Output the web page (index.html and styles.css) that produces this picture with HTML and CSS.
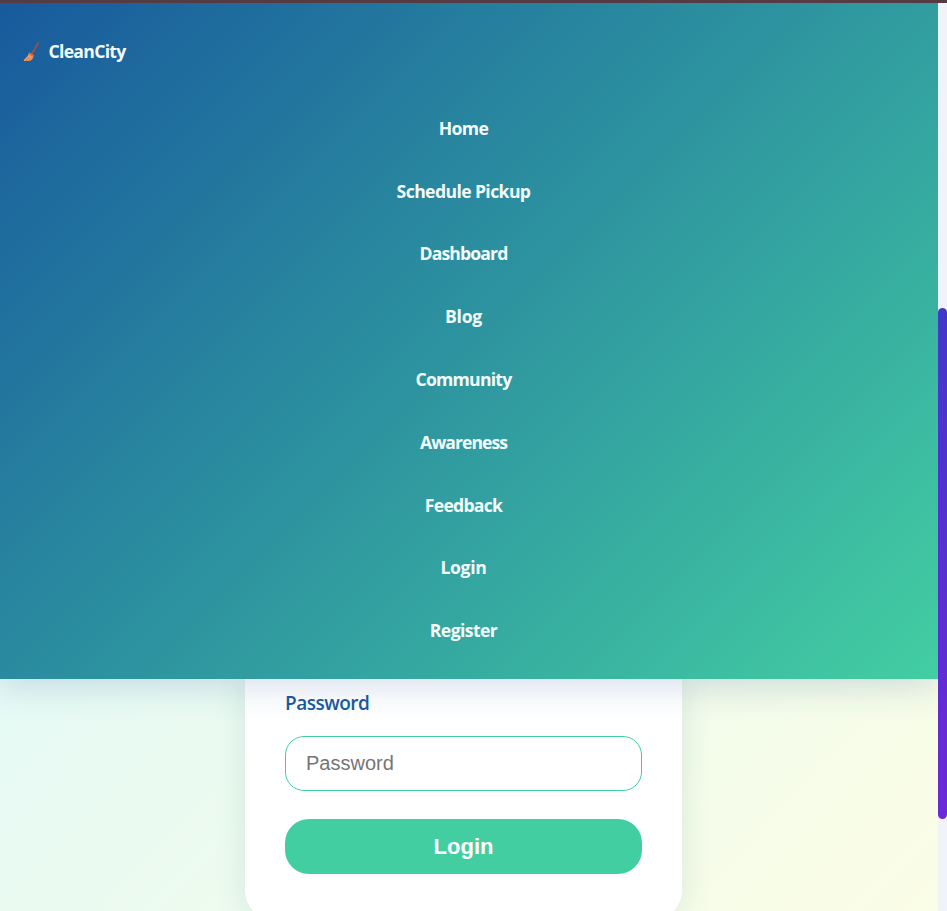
FILE: index.html
```
<!DOCTYPE html>
<html lang="en">
<head>
<meta charset="utf-8">
<title>CleanCity</title>
<link rel="stylesheet" href="styles.css">
</head>
<body>
<div class="window">
  <div class="page">
    <header class="navbar">
      <a class="brand">
        <svg class="broom" viewBox="0 0 18 20" aria-hidden="true">
          <path d="M15 1.2 9 11.8" stroke="#96504a" stroke-width="2" stroke-linecap="round"/>
          <path d="M6.4 10.4 10.8 13.4Q10 17 7.4 18.7L.8 18.9Q.4 17.6 2 16.7 5 14.4 6.4 10.4Z" fill="#f79b56"/>
          <path d="m6.5 10.4 4.4 3.1-.7 1.4-4.9-2.8Z" fill="#e5643e"/>
          <path d="m3 18.2 3.5-3M6 18.3l2.6-2.5" stroke="#d96c48" stroke-width=".8"/>
        </svg>
        <span class="brand-name">CleanCity</span>
      </a>
      <nav class="links">
        <a class="home">Home</a>
        <a class="schedule">Schedule Pickup</a>
        <a class="dashboard">Dashboard</a>
        <a class="blog">Blog</a>
        <a class="community">Community</a>
        <a class="awareness">Awareness</a>
        <a class="feedback">Feedback</a>
        <a class="login">Login</a>
        <a class="register">Register</a>
      </nav>
    </header>
    <main class="content">
      <form class="card">
        <label class="label" for="password">Password</label>
        <input class="field" id="password" type="password" placeholder="Password">
        <button class="submit" type="button">Login</button>
      </form>
    </main>
  </div>
  <div class="scrollbar"><div class="thumb"></div></div>
</div>
</body>
</html>
```
FILE: styles.css
```
* { box-sizing: border-box; }
body {
  margin: 0;
  font-family: "Open Sans", "Noto Sans", sans-serif;
  overflow: hidden;
}
.window {
  display: flex;
  height: 911px;
  border-top: 3px solid #553b43;
}
.page {
  width: 938px;
  display: flex;
  flex-direction: column;
  overflow: hidden;
}
.navbar {
  position: relative;
  z-index: 1;
  flex: none;
  height: 676px;
  padding: 31px 11px 0 0;
  background: linear-gradient(135deg, #185a9d, #43cea2);
  box-shadow: 0 8px 32px rgba(31, 80, 150, 0.18);
  color: #f3fbfb;
  font-size: 17.6px;
  font-weight: 700;
}
.brand {
  display: flex;
  align-items: center;
  gap: 7.5px;
  height: 34px;
  padding-left: 23px;
}
.broom { width: 18px; height: 20px; margin-top: 2px; fill: none; }
.brand-name { letter-spacing: -0.7px; }
.links {
  display: flex;
  flex-direction: column;
  align-items: center;
  padding-top: 28.9px;
}
.links a {
  height: 62.8px;
  line-height: 62.8px;
  letter-spacing: -0.6px;
}
.links .blog, .links .login { letter-spacing: -0.3px; }
.links .dashboard { letter-spacing: -0.85px; }
.links .awareness { letter-spacing: -0.95px; }
.links .community, .links .feedback { letter-spacing: -0.75px; }
.content {
  flex: 1;
  display: flex;
  justify-content: center;
  padding-right: 11px;
  background: linear-gradient(135deg, #e6faf5, #fbfde5);
}
.card {
  flex: none;
  width: 437px;
  height: 240px;
  padding: 9px 40px 0;
  border-radius: 0 0 28px 28px;
  background: #fff;
  box-shadow: 0 0 32px rgba(24, 90, 110, 0.13);
  display: flex;
  flex-direction: column;
}
.label {
  height: 30px;
  line-height: 30px;
  margin-bottom: 18px;
  color: #185a9d;
  font-size: 19px;
  font-weight: 600;
  letter-spacing: -0.5px;
}
.field {
  height: 55px;
  margin: 0 0 28px;
  padding: 0 20px;
  border: 1px solid #43cea2;
  border-radius: 19px;
  background: #fff;
  font: 20px "Liberation Sans", Arial, sans-serif;
}
.field::placeholder { color: #757575; opacity: 1; }
.submit {
  height: 55px;
  border: 0;
  border-radius: 24px;
  background: #43cea2;
  color: #fff;
  font: bold 22px "Liberation Sans", Arial, sans-serif;
}
.scrollbar {
  width: 9px;
  padding-top: 305px;
  background: #f0f4fa;
}
.thumb {
  height: 511px;
  border-radius: 5px;
  background: linear-gradient(#4338ca, #6d28d9);
}
```
